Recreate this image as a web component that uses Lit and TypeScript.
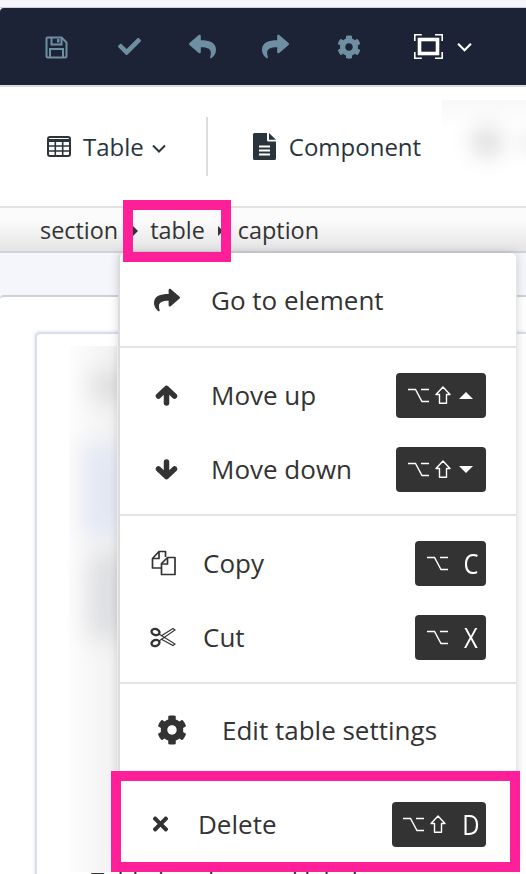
import { LitElement, html, css } from "lit";
import { customElement } from "lit/decorators.js";

const fa = (vb: string, d: string, cls = "") =>
  html`<svg class=${cls} viewBox=${vb} fill="currentColor"><path d=${d}></path></svg>`;

const SHARE = "M503.7 189.8L327.7 37.9C312.3 24.6 288 35.4 288 56v80.1C127.4 138 0 170.1 0 322c0 61.3 39.5 122 83.1 153.7 13.6 9.9 33-2.5 28-18.6C66 312.5 132.6 273.4 288 271.2V360c0 20.6 24.3 31.5 39.7 18.2l176-152c11.1-9.6 11.1-26.8 0-36.4z";
const REPLY = "M8.3 189.8L184.3 37.9C199.7 24.6 224 35.4 224 56v80.1C384.6 138 512 170.1 512 322c0 61.3-39.5 122-83.1 153.7-13.6 9.9-33-2.5-28-18.6C446 312.5 379.4 273.4 224 271.2V360c0 20.6-24.3 31.5-39.7 18.2l-176-152c-11.1-9.6-11.1-26.8 0-36.4z";
const COG = "M487.4 315.7l-42.6-24.6c4.3-23.2 4.3-47 0-70.2l42.6-24.6c4.9-2.8 7.1-8.6 5.5-14-11.1-35.6-30-67.8-54.7-94.6-3.8-4.1-10-5.1-14.8-2.3L380.8 110c-17.9-15.4-38.5-27.3-60.8-35.1V25.8c0-5.6-3.9-10.5-9.4-11.7-36.7-8.2-74.3-7.8-109.2 0-5.5 1.2-9.4 6.1-9.4 11.7V75c-22.2 7.9-42.8 19.8-60.8 35.1L88.7 85.5c-4.9-2.8-11-1.9-14.8 2.3-24.7 26.7-43.6 58.9-54.7 94.6-1.7 5.4.6 11.2 5.5 14L67.3 221c-4.3 23.2-4.3 47 0 70.2l-42.6 24.6c-4.9 2.8-7.1 8.6-5.5 14 11.1 35.6 30 67.8 54.7 94.6 3.8 4.1 10 5.1 14.8 2.3l42.6-24.6c17.9 15.4 38.5 27.3 60.8 35.1v49.2c0 5.6 3.9 10.5 9.4 11.7 36.7 8.2 74.3 7.8 109.2 0 5.5-1.2 9.4-6.1 9.4-11.7v-49.2c22.2-7.9 42.8-19.8 60.8-35.1l42.6 24.6c4.9 2.8 11 1.9 14.8-2.3 24.7-26.7 43.6-58.9 54.7-94.6 1.5-5.5-.7-11.3-5.6-14.1zM256 336c-44.1 0-80-35.9-80-80s35.9-80 80-80 80 35.9 80 80-35.9 80-80 80z";
const CHECK = "M173.9 439.4l-166.4-166.4c-10-10-10-26.2 0-36.2l36.2-36.2c10-10 26.2-10 36.2 0L192 312.7 432.1 72.6c10-10 26.2-10 36.2 0l36.2 36.2c10 10 10 26.2 0 36.2l-294.4 294.4c-10 10-26.2 10-36.2 0z";
const TIMES = "M242.7 256l100.1-100.1c12.3-12.3 12.3-32.2 0-44.5l-22.2-22.2c-12.3-12.3-32.2-12.3-44.5 0L176 189.3 75.9 89.2c-12.3-12.3-32.2-12.3-44.5 0L9.2 111.5c-12.3 12.3-12.3 32.2 0 44.5L109.3 256 9.2 356.1c-12.3 12.3-12.3 32.2 0 44.5l22.2 22.2c12.3 12.3 32.2 12.3 44.5 0L176 322.700l100.1 100.1c12.3 12.3 32.2 12.3 44.5 0l22.2-22.2c12.3-12.3 12.3-32.2 0-44.5L242.7 256z";

const saveIcon = html`<svg class="tb-save" viewBox="0 0 23 23" fill="none" stroke="currentColor" stroke-width="2"><path d="M2.500 1.500h14l5 5v13.500a1.500 1.500 0 0 1-1.500 1.500H3a1.500 1.500 0 0 1-1.500-1.500V2.500a1 1 0 0 1 1-1z"/><path d="M6.500 1.500v7h10v-7M5 21v-8h13v8"/><path d="M12 3v3.500h2.500V3z" fill="currentColor" stroke="none"/></svg>`;
const focusIcon = html`<svg class="focus" viewBox="0 0 29 25" fill="none" stroke="#fff"><path d="M.8 7V.8h7M21 .8h7.200v6.200M.8 18v6.200h7M28.200 18v6.200H21" stroke-width="1.600"/><rect x="5.500" y="5.500" width="18" height="14" stroke-width="3.600"/></svg>`;
const chev = (cls: string) => html`<svg class=${cls} viewBox="0 0 14 9" fill="none" stroke="currentColor" stroke-width="2"><path d="M1 1.500l6 6 6-6"/></svg>`;
const tableIcon = html`<svg class="tbl" viewBox="0 0 24 21" fill="none" stroke="currentColor"><rect x="1" y="1" width="22" height="19" rx="2" stroke-width="2"/><path d="M1 4.500h22" stroke-width="3"/><path d="M1 10h22M1 15h22M8.300 5v15M15.700 5v15" stroke-width="1.600"/></svg>`;
const docIcon = html`<svg class="doc" viewBox="0 0 23 27" fill="currentColor"><path fill-rule="evenodd" d="M1.500 0H14v7a1.500 1.500 0 0 0 1.500 1.500H23V25.500A1.500 1.500 0 0 1 21.500 27h-20A1.500 1.500 0 0 1 0 25.500V1.500A1.500 1.500 0 0 1 1.500 0zM6 12.500v2h11v-2zM6 16.500v2h11v-2zM6 20.500v2h11v-2z"/><path d="M16 0l7 6.800h-7z"/></svg>`;
const copyIcon = html`<svg class="mi-copy" viewBox="0 0 26 26" fill="none" stroke="currentColor" stroke-width="1.700" stroke-linejoin="round"><path d="M10 18H1.500V8.500L8 1.500h6.500V7"/><path d="M8 2v6.500H2"/><path d="M10.500 24.500V13.500L16.500 7.500h7.500v17z"/><path d="M16.500 8v6h-5.500"/></svg>`;
const cutIcon = html`<svg class="mi-cut" viewBox="0 0 26 22" fill="none" stroke="currentColor"><ellipse cx="5.500" cy="6" rx="4" ry="3" stroke-width="2.400" transform="rotate(20 5.500 6)"/><ellipse cx="5.500" cy="17" rx="4" ry="3" stroke-width="2.400" transform="rotate(-20 5.500 17)"/><path d="M9 8l16 10-2 1.500L11 13M9 15L25 4l-2-1.500L11 10" stroke-width="1.100"/></svg>`;
const upIcon = html`<svg class="mi-arrow" viewBox="0 0 23 21" fill="none" stroke="currentColor" stroke-width="5.500" stroke-linecap="round" stroke-linejoin="round"><path d="M3.500 11L11.500 3.500 19.500 11M11.500 4v14"/></svg>`;
const downIcon = html`<svg class="mi-arrow" viewBox="0 0 23 21" fill="none" stroke="currentColor" stroke-width="5.500" stroke-linecap="round" stroke-linejoin="round"><path d="M3.500 10L11.500 17.500 19.500 10M11.500 17V3"/></svg>`;
const opt = html`<svg class="k-opt" viewBox="0 0 21 15" fill="none" stroke="#fff" stroke-width="1.400"><path d="M0 1.500h7.500L14 13.500h7M13 1.500h8"/></svg>`;
const shift = html`<svg class="k-shift" viewBox="0 0 16 18" fill="none" stroke="#fff" stroke-width="1.400" stroke-linejoin="round"><path d="M8 1L15 8.500h-3.500v8.800H4.500V8.500H1z"/></svg>`;
const keycap = (kids: unknown, w: number) => html`<span class="kbd" style="width:${w}px">${kids}</span>`;

@customElement("app-root")
export class AppRoot extends LitElement {
  static styles = css`
    :host { display: block; width: 526px; height: 874px; position: relative; overflow: hidden; background: #f4f6fb; font-family: "Open Sans", sans-serif; color: #2f363d; }
    svg { display: block; flex: none; }
    .topgap { height: 7px; border-bottom: 1px solid #cfd2da; }
    .bar { height: 77px; background: #1c2336; border-radius: 4px 0 0 0; display: flex; align-items: center; padding-left: 45px; color: #6e8fa1; border-bottom: 2px solid #d9dbe0; }
    .tb-slot { display: flex; }
    .s1 { width: 73px; } .s2 { width: 71px; } .s3 { width: 73px; } .s4 { width: 75px; } .s5 { width: 77px; }
    .tb-save { width: 23px; height: 23px; margin-top: 1px; }
    .tb-check { width: 23px; height: 23px; }
    .tb-arrow { width: 27px; height: 27px; }
    .tb-cog { width: 24px; height: 24px; }
    .focus { width: 29px; height: 25px; }
    .chev-w { width: 15px; height: 10px; color: #fff; margin-left: 14px; }
    .toolbar { height: 119px; background: #fff; display: flex; align-items: center; position: relative; color: #29343d; font-size: 24px; }
    .tbl { width: 24px; height: 21px; margin-left: 47px; }
    .tool-label { margin-left: 12px; }
    .tool-label2 { margin-left: 13px; }
    .chev-d { width: 14px; height: 9px; margin-left: 8px; margin-top: 3px; }
    .sep { width: 2px; height: 59px; background: #dcdcdc; margin-left: 40px; }
    .doc { width: 23px; height: 27px; margin-left: 45px; }
    .tb-clip { position: absolute; left: 442px; top: 13px; right: 0; height: 95px; overflow: hidden; background: linear-gradient(#f8f8f8, #fff 30%); }
    .tb-blur { position: absolute; left: 30px; top: 28px; width: 30px; height: 28px; border-radius: 50%; background: #d8d8d8; filter: blur(11px); }
    .tb-blur2 { position: absolute; left: 78px; top: 30px; width: 20px; height: 24px; border-radius: 50%; background: #ececec; filter: blur(9px); }
    .crumbs { height: 47px; box-sizing: border-box; border-top: 2px solid #e2e2e2; border-bottom: 2px solid #cfd2da; background: linear-gradient(#fbfbfb 30%, #e4e4e4); display: flex; align-items: center; padding-left: 40px; font-size: 23.400px; color: #333; }
    .crumb-arrow { width: 0; height: 0; border-left: 5px solid #29343d; border-top: 5px solid transparent; border-bottom: 5px solid transparent; margin-top: 2px; }
    .a1 { margin-left: 15px; margin-right: 12px; }
    .a2 { margin-left: 13px; margin-right: 15px; }
    .band { height: 42px; background: #f4f6fb; }
    .panel { height: 579px; overflow: hidden; box-sizing: border-box; background: #fff; border-top: 2px solid #cdd0d8; border-radius: 4px 0 0 0; padding: 35px 0 0 35px; }
    .card { height: 600px; background: #fff; border-left: 2px solid #d5ddee; border-top: 2px solid #d5ddee; border-radius: 5px 0 0 0; box-shadow: -1px -1px 3px #e4e9f5; position: relative; padding: 532px 0 0 54px; }
    .cut-text { font-size: 24px; color: #333; white-space: nowrap; line-height: 30px; }
    .blur-clip { position: absolute; left: 32px; top: 12px; width: 48px; height: 526px; overflow: hidden; background: linear-gradient(90deg, #fdfdfd, #f1f1f1); }
    .blob { position: absolute; }
    .b1 { left: 24px; top: 26px; width: 45px; height: 28px; background: #dcdcdc; filter: blur(11px); }
    .b2 { left: 14px; top: 98px; width: 60px; height: 92px; background: #e3e7f3; filter: blur(11px); }
    .b3 { left: 20px; top: 208px; width: 60px; height: 84px; background: #dddee1; filter: blur(12px); }
    .menu { position: absolute; left: 118px; top: 253px; width: 399px; background: #fff; border-left: 2px solid #dcdcdc; border-right: 1px solid #e6e6e6; border-radius: 5px 5px 0 0; box-sizing: border-box; color: #333; font-size: 26px; box-shadow: 0 0 10px rgba(0,0,0,.16); }
    .group { border-bottom: 2px solid #e4e4e4; box-sizing: border-box; }
    .g1 { height: 95px; display: flex; align-items: center; }
    .g2, .g3 { height: 168px; padding: 10px 0; }
    .g4 { height: 84px; display: flex; align-items: center; border-bottom: none; padding-top: 8px; }
    .row { display: flex; align-items: center; height: 74px; }
    .label { flex: 1; }
    .mi-share { width: 26px; height: 26px; margin-left: 34px; margin-right: 31px; }
    .mi-arrow { width: 23px; height: 21px; margin-left: 35px; margin-right: 33px; }
    .mi-copy { width: 26px; height: 26px; margin-left: 31px; margin-right: 26px; }
    .mi-cut { width: 26px; height: 22px; margin-left: 30px; margin-right: 27px; }
    .mi-cog { width: 30px; height: 30px; margin-left: 37px; margin-right: 35px; }
    .kbd { height: 45px; background: #333; border-radius: 4px; margin-right: 30px; display: flex; align-items: center; box-sizing: border-box; padding: 0 9px 0 12px; color: #fff; flex: none; }
    .k-opt { width: 21px; height: 15px; }
    .k-shift { width: 16px; height: 18px; margin-left: 6px; }
    .k-tri-u, .k-tri-d { width: 0; height: 0; border-left: 7px solid transparent; border-right: 7px solid transparent; margin-left: 8px; }
    .k-tri-u { border-bottom: 7px solid #fff; }
    .k-tri-d { border-top: 7px solid #fff; }
    .k-letter { margin-left: auto; width: 12px; display: flex; justify-content: center; font-size: 28px; line-height: 28px; transform: scaleX(.85); }
    .delete-row { position: absolute; left: 111px; top: 771px; width: 409px; height: 101px; box-sizing: border-box; border: 10px solid #ff1f99; background: #fff; display: flex; align-items: center; padding-top: 5px; color: #333; font-size: 26px; }
    .x { width: 17px; height: 22px; margin-left: 31px; margin-right: 29px; flex: none; }
    .delete-row .kbd { margin-right: 24px; padding-left: 11px; }
    .crumb-box { position: absolute; left: 123px; top: 200px; width: 108px; height: 62px; box-sizing: border-box; border: 10px solid #ff1f99; }
  `;

  render() {
    return html`
      <div class="topgap"></div>
      <div class="bar">
        <div class="tb-slot s1">${saveIcon}</div>
        <div class="tb-slot s2">${fa("0 0 512 512", CHECK, "tb-check")}</div>
        <div class="tb-slot s3">${fa("0 0 512 512", REPLY, "tb-arrow")}</div>
        <div class="tb-slot s4">${fa("0 0 512 512", SHARE, "tb-arrow")}</div>
        <div class="tb-slot s5">${fa("0 0 512 512", COG, "tb-cog")}</div>
        ${focusIcon}${chev("chev-w")}
      </div>
      <div class="toolbar">
        <div class="tb-clip"><div class="tb-blur"></div><div class="tb-blur2"></div></div>
        ${tableIcon}<span class="tool-label">Table</span>${chev("chev-d")}
        <div class="sep"></div>
        ${docIcon}<span class="tool-label2">Component</span>
      </div>
      <div class="crumbs">
        <span>section</span><span class="crumb-arrow a1"></span>
        <span>table</span><span class="crumb-arrow a2"></span>
        <span>caption</span>
      </div>
      <div class="band"></div>
      <div class="panel">
        <div class="card">
          <div class="blur-clip">
            <div class="blob b1"></div>
            <div class="blob b2"></div>
            <div class="blob b3"></div>
          </div>
          <div class="cut-text">Table headers and labels</div>
        </div>
      </div>

      <div class="menu">
        <div class="group g1">
          ${fa("0 0 512 512", SHARE, "mi-share")}<span class="label">Go to element</span>
        </div>
        <div class="group g2">
          <div class="row">${upIcon}<span class="label">Move up</span>
            ${keycap(html`${opt}${shift}<span class="k-tri-u"></span>`, 90)}</div>
          <div class="row">${downIcon}<span class="label">Move down</span>
            ${keycap(html`${opt}${shift}<span class="k-tri-d"></span>`, 90)}</div>
        </div>
        <div class="group g3">
          <div class="row">${copyIcon}<span class="label">Copy</span>
            ${keycap(html`${opt}<span class="k-letter">C</span>`, 71)}</div>
          <div class="row">${cutIcon}<span class="label">Cut</span>
            ${keycap(html`${opt}<span class="k-letter">X</span>`, 71)}</div>
        </div>
        <div class="group g4">
          ${fa("0 0 512 512", COG, "mi-cog")}<span class="label">Edit table settings</span>
        </div>
        <div style="height:94px"></div>
      </div>
      <div class="delete-row">
        ${fa("0 0 352 512", TIMES, "x")}<span class="label">Delete</span>
        ${keycap(html`${opt}${shift}<span class="k-letter">D</span>`, 94)}
      </div>
      <div class="crumb-box"></div>
    `;
  }
}
